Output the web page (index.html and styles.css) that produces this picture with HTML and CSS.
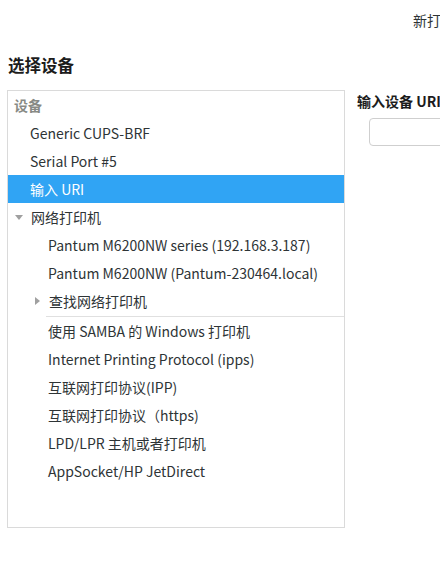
FILE: index.html
```html
<!DOCTYPE html>
<html lang="zh">
<head>
<meta charset="utf-8">
<link rel="stylesheet" href="styles.css">
</head>
<body>
<div class="window">
  <div class="header"><span class="header-title">新打印机</span></div>
  <h1 class="title">选择设备</h1>
  <div class="content">
    <div class="list">
      <div class="row group">设备</div>
      <div class="row lvl1">Generic CUPS-BRF</div>
      <div class="row lvl1">Serial Port #5</div>
      <div class="row lvl1 selected">输入 URI</div>
      <div class="row lvl0"><span class="arrow down"></span>网络打印机</div>
      <div class="row lvl2">Pantum M6200NW series (192.168.3.187)</div>
      <div class="row lvl2">Pantum M6200NW (Pantum-230464.local)</div>
      <div class="row lvl1b"><span class="arrow right"></span>查找网络打印机</div>
      <div class="sep"></div>
      <div class="row lvl2">使用 SAMBA 的 Windows 打印机</div>
      <div class="row lvl2">Internet Printing Protocol (ipps)</div>
      <div class="row lvl2">互联网打印协议(IPP)</div>
      <div class="row lvl2">互联网打印协议（https)</div>
      <div class="row lvl2">LPD/LPR 主机或者打印机</div>
      <div class="row lvl2">AppSocket/HP JetDirect</div>
    </div>
    <div class="panel">
      <div class="panel-label">输入设备 URI</div>
      <div class="uri-input"></div>
    </div>
  </div>
</div>
</body>
</html>
```
FILE: styles.css
```css
html, body {
  margin: 0;
  padding: 0;
  background: #ffffff;
}
body {
  width: 440px;
  height: 587px;
  overflow: hidden;
  font-family: "Noto Sans CJK SC", "Noto Sans", sans-serif;
  font-size: 14px;
  color: #2e3436;
}
.window {
  width: 440px;
}
.header {
  height: 40px;
  padding-left: 413px;
  white-space: nowrap;
  overflow: hidden;
  line-height: 40px;
  box-sizing: border-box;
}
.header-title {
  font-size: 14px;
  color: #2e3436;
}
.title {
  margin: 13px 0 0 8px;
  font-size: 16.5px;
  font-weight: bold;
  line-height: 24px;
  height: 24px;
  color: #1c1c1c;
}
.content {
  display: flex;
  margin-top: 13px;
  margin-left: 7px;
}
.list {
  flex: 0 0 auto;
  width: 336px;
  height: 436px;
  border: 1px solid #dadada;
  box-sizing: content-box;
}
.row {
  height: 28px;
  line-height: 28px;
  white-space: nowrap;
  display: flex;
  align-items: center;
}
.group {
  padding-left: 6px;
  color: #888a85;
  font-weight: bold;
}
.lvl0 { padding-left: 6px; }
.lvl1 { padding-left: 22px; }
.lvl1b { padding-left: 26px; }
.lvl2 { padding-left: 40px; }
.selected {
  background: #30a4f4;
  color: #ffffff;
}
.arrow {
  display: inline-block;
  width: 0;
  height: 0;
  border-style: solid;
}
.arrow.down {
  border-width: 5px 4px 0 4px;
  border-color: #a0a0a0 transparent transparent transparent;
  margin-right: 8px;
  margin-left: 1px;
}
.arrow.right {
  border-width: 4px 0 4px 5px;
  border-color: transparent transparent transparent #a0a0a0;
  margin-right: 9px;
  margin-left: 1px;
}
.sep {
  height: 1px;
  margin-left: 38px;
  background: #e0e0e0;
  margin-top: 1px;
}
.panel {
  flex: 1 1 auto;
  margin-left: 12px;
  min-width: 0;
}
.panel-label {
  font-weight: bold;
  line-height: 22px;
  white-space: nowrap;
  color: #1c1c1c;
}
.uri-input {
  margin-top: 6px;
  margin-left: 12px;
  height: 26px;
  width: 200px;
  border: 1px solid #cfcfcf;
  border-radius: 4px;
}
```
